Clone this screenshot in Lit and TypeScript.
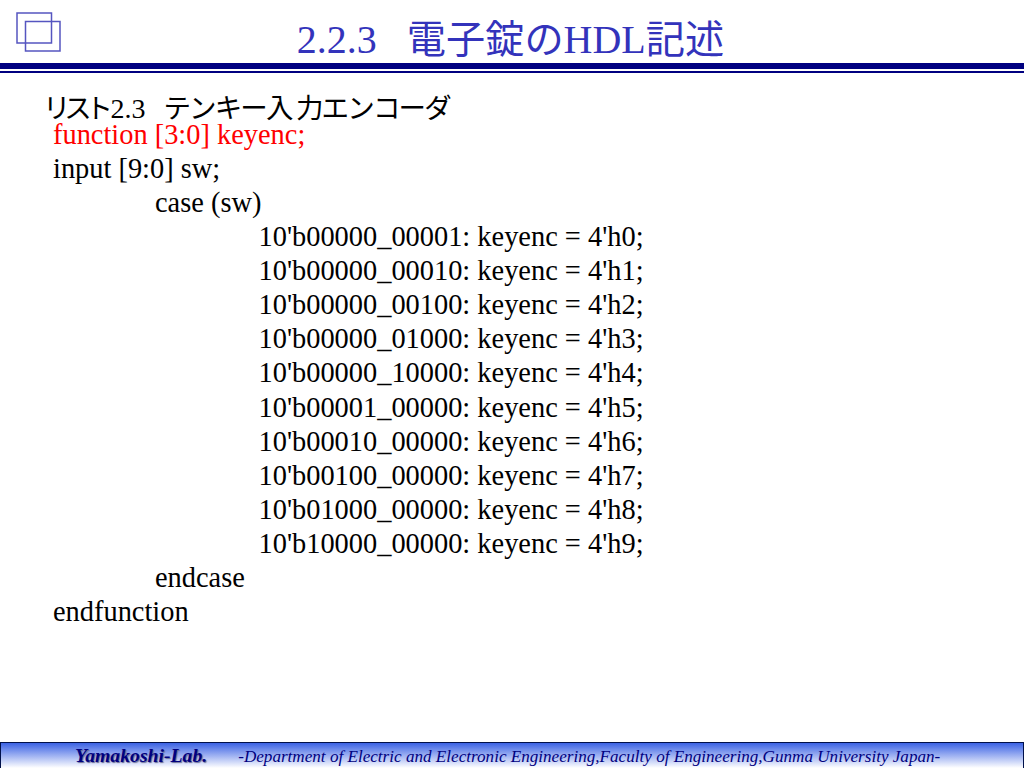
import { LitElement, html, css } from "lit";
import { customElement } from "lit/decorators.js";

const ROWS = ["00000_00001","00000_00010","00000_00100","00000_01000","00000_10000","00001_00000","00010_00000","00100_00000","01000_00000","10000_00000"];

@customElement("app-root")
export class AppRoot extends LitElement {
  static styles = css`
    :host { display: flex; flex-direction: column; width: 1024px; height: 768px; background: #fff; overflow: hidden;
      font-family: "Liberation Serif", "Noto Sans CJK JP", serif; }
    .head { position: relative; height: 63px; display: flex; justify-content: center; }
    .logo { position: absolute; left: 16px; top: 12px; }
    .title { margin: 17px 0 0 -3px; font-size: 40px; line-height: 46px; color: #3333bb; white-space: pre; }
    .kanji { font-size: 39.2px; }
    .rule1 { height: 6px; background: #000080; flex: none; }
    .rule2 { height: 2px; background: #000080; margin-top: 2px; flex: none; }
    .sub { display: flex; align-items: baseline; margin: 18px 0 0 43px; font-size: 28px; line-height: 30px; height: 30px; color: #000; white-space: pre; }
    .jp { font-family: "Noto Sans CJK JP", sans-serif; font-size: 27.5px; letter-spacing: -1.85px; }
    .tight { letter-spacing: -6.2px; margin-right: 3.5px; }
    .keys { margin-left: 18px; }
    .code { flex: 1; margin: -3px 0 0 53px; font-size: 28.4px; line-height: 34.07px; color: #000; white-space: pre; }
    .red { color: #ff0000; }
    .i1 { padding-left: 102px; }
    .i2 { padding-left: 205.5px; }
    .foot { height: 26px; flex: none; box-sizing: border-box; border: 1px solid #00104a; border-bottom: none;
      background: linear-gradient(#3b62e4, #fff); display: flex; align-items: flex-end; color: #000080; white-space: pre; }
    .lab { margin-left: 74px; font: italic bold 19.7px/25px "Liberation Serif", serif; text-shadow: 1px 1px 1px #6a6a90; }
    .dept { margin-left: 31px; font: italic 17.12px/23px "Liberation Serif", serif; }
  `;
  render() {
    return html`
      <div class="head">
        <svg class="logo" width="46" height="40" viewBox="0 0 46 40" fill="none" stroke="#5555c0" stroke-width="1.5">
          <rect x="1" y="1" width="34.5" height="30"/>
          <rect x="9.5" y="9.5" width="34.5" height="29.5"/>
        </svg>
        <div class="title">2.2.3   <span class="kanji">電子錠の</span>HDL<span class="kanji">記述</span></div>
      </div>
      <div class="rule1"></div>
      <div class="rule2"></div>
      <div class="sub"><span class="jp tight">リスト</span><span>2.3</span><span class="jp keys">テンキー入 力エンコーダ</span></div>
      <div class="code"><div class="red">function [3:0] keyenc;</div><div>input [9:0] sw;</div><div class="i1">case (sw)</div>${ROWS.map((r, i) => html`<div class="i2">10'b${r}: keyenc = 4'h${i};</div>`)}<div class="i1">endcase</div><div>endfunction</div></div>
      <div class="foot"><span class="lab">Yamakoshi-Lab.</span><span class="dept">-Department of Electric and Electronic Engineering,Faculty of Engineering,Gunma University Japan-</span></div>
    `;
  }
}
